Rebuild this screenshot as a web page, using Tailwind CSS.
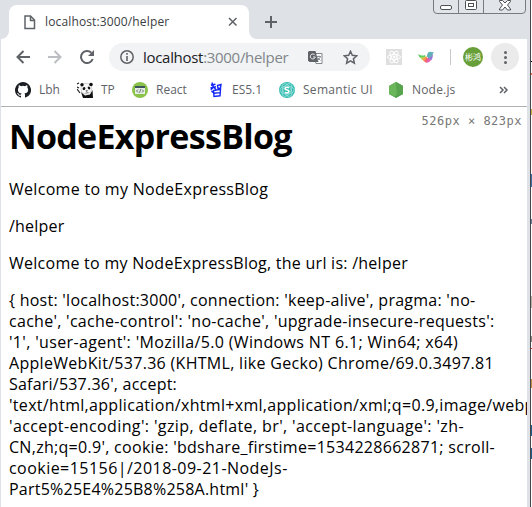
<!DOCTYPE html>
<html lang="en">
<head>
<meta charset="utf-8">
<title>localhost:3000/helper</title>
<script src="https://cdn.jsdelivr.net/npm/@tailwindcss/browser@4"></script>
</head>
<body class="w-[532px] h-[507px] overflow-hidden bg-white font-['Open_Sans','Noto_Sans_CJK_SC',sans-serif]">
<div class="flex w-[532px] h-[507px] overflow-hidden">
<div class="relative flex flex-col w-[530px] h-full bg-[#dee1e6] pl-px">
  <!-- window buttons -->
  <div class="absolute left-[433px] top-[-6px] w-[93px] h-5 border border-[#777b80] rounded-b-[4px] flex bg-[#e1e4e8]">
    <div class="w-[25px] border-r border-[#777b80]"></div>
    <div class="w-[25px] border-r border-[#777b80]"></div>
    <svg class="absolute left-0 top-[5px]" width="92" height="13" fill="none" stroke="#4d5156">
      <rect x="6.500" y="5.500" width="11" height="4" rx="1.500" fill="#fff"/>
      <rect x="31.500" y="0.500" width="11" height="9" rx="1" fill="#fff"/><rect x="34.500" y="3.500" width="5" height="3"/>
      <path d="M65.500 0.500h3l2.500 2.500 2.500-2.500h3v1l-3 3.500 3 4v1h-3l-2.500-3-2.500 3h-3v-1l3-4-3-3.500z" fill="#fff"/>
    </svg>
  </div>
  <!-- tab strip -->
  <div class="h-[39px] shrink-0 flex pt-[5px]">
    <div class="self-end w-2 h-2 bg-white"><div class="w-2 h-2 bg-[#dee1e6] rounded-br-[8px]"></div></div>
    <div class="w-[240px] h-[34px] bg-white rounded-t-[8px] flex items-center">
      <svg class="ml-[15px]" width="12" height="15" fill="none" stroke="#5f6368" stroke-width="1.500"><path d="M1 1h5.500l4 4v8.500H1zM6.500 1v4.500h4"/></svg>
      <div class="ml-[9px] w-[126px] pb-px text-[12px] leading-[16px] tracking-[0.14px] text-[#3c4043] whitespace-nowrap">localhost:3000/helper</div>
      <svg class="ml-[57px]" width="10" height="10" stroke="#5f6368" stroke-width="1.500"><path d="M1 1l7.500 7.500M8.500 1L1 8.500"/></svg>
    </div>
    <div class="self-end w-2 h-2 bg-white"><div class="w-2 h-2 bg-[#dee1e6] rounded-bl-[8px]"></div></div>
    <svg class="ml-[8px] mt-[11px]" width="12" height="12" stroke="#5f6368" stroke-width="2"><path d="M6 0v12M0 6h12"/></svg>
  </div>
  <!-- toolbar -->
  <div class="w-[526px] h-[36px] shrink-0 bg-white flex items-center">
    <svg class="ml-[15px]" width="14" height="14" fill="none" stroke="#5f6368" stroke-width="2"><path d="M14 7H1.500M7.500 1L1.500 7l6 6"/></svg>
    <svg class="ml-[18px]" width="14" height="14" fill="none" stroke="#bcbec1" stroke-width="2"><path d="M0 7h12.500M6.500 1l6 6-6 6"/></svg>
    <svg class="ml-[18px]" width="14" height="14" fill="none" stroke="#5f6368" stroke-width="2"><path d="M12.700 9A6 6 0 1 1 11.300 2.800"/><path d="M14 0v6H8z" fill="#5f6368" stroke="none"/></svg>
    <div class="ml-[15px] w-[261px] h-7 rounded-full bg-[#f1f3f4] flex items-center">
      <svg class="ml-[11px]" width="14" height="14"><circle cx="7" cy="7" r="6.200" fill="none" stroke="#5f6368" stroke-width="1.500"/><path d="M6.200 6h1.600v5H6.200zM6.200 3h1.600v1.700H6.200z" fill="#5f6368"/></svg>
      <div class="ml-[9px] w-[146px] pb-px text-[15px] leading-[20px] tracking-[-0.3px] text-[#202124] whitespace-nowrap">localhost<span class="text-[#80868b]">:3000/helper</span></div>
      <svg class="ml-[19px]" width="15" height="15"><path d="M5 3.500h9v10H8z" fill="#fff" stroke="#80868b"/><path d="M1 1h6.500l3 11H1.500L0 10.500V2z" fill="#5f6368"/><path d="M7 5.200A2.500 2.500 0 1 0 7.300 7H5" fill="none" stroke="#e8eaed"/><path d="M8.500 6.500H13M11 5.500v1M12.500 6.500q-.5 2-3 4M9.500 7.500l3 3" fill="none" stroke="#80868b" stroke-width=".9"/></svg>
      <svg class="ml-[20px]" width="15" height="15" fill="none" stroke="#5f6368" stroke-width="1.500"><path d="M7.500 1.300l1.800 4 4.400.5-3.300 2.900 1 4.400-3.900-2.300-3.900 2.300 1-4.400-3.300-2.900 4.400-.5z"/></svg>
    </div>
    <svg class="ml-[16px]" width="16" height="16"><path d="M0 0h16v16H0z" fill="#dfdfdf"/><g fill="none" stroke="#fff"><ellipse cx="8" cy="8" rx="6.500" ry="2.500"/><ellipse cx="8" cy="8" rx="6.500" ry="2.500" transform="rotate(60 8 8)"/><ellipse cx="8" cy="8" rx="6.500" ry="2.500" transform="rotate(120 8 8)"/></g><circle cx="8" cy="8" r="1.300" fill="#fff"/></svg>
    <svg class="ml-[16px]" width="17" height="16"><path d="M0 5q4 2.500 7 1l1 4-4 .5Q1 9 0 5" fill="#62cc62"/><path d="M2 8q3 1 6-.5l-1 3.500-2 .5z" fill="#d6dc52"/><path d="M4 9.800l5-2.500v4l-3 1.200z" fill="#f5a04e"/><path d="M6 12l3-3.500 2 2-2 3.300q-2 0-3-1.800" fill="#f2686c"/><path d="M8.500 13.800L10 8l3 3q-2 3-4.500 2.800" fill="#e060b4"/><path d="M10 8.500l4.500-4q1 4-1.500 7z" fill="#9a75d8"/><path d="M9 7.500q0-4.500 3.500-4.700L16 3.500 14.500 5q-.5 3-4 4z" fill="#5fb0b8"/></svg>
    <div class="ml-[15px] w-px h-4 bg-[#c7cacd]"></div>
    <div class="ml-[12px] w-5 h-5 rounded-full bg-[#689f38] text-white text-[8px] leading-[20px] text-center whitespace-nowrap">彬鸿</div>
    <div class="ml-[8px] w-7 h-7 rounded-full bg-[#ebebeb] flex flex-col items-center justify-center gap-[2px]">
      <div class="w-[3px] h-[3px] rounded-full bg-[#5f6368]"></div><div class="w-[3px] h-[3px] rounded-full bg-[#5f6368]"></div><div class="w-[3px] h-[3px] rounded-full bg-[#5f6368]"></div>
    </div>
  </div>
  <!-- bookmarks -->
  <div class="w-[526px] h-[32px] shrink-0 bg-white border-b border-[#b0b1b3] flex items-center pb-[2px] text-[12px] leading-[16px] text-[#5f6368] whitespace-nowrap">
    <svg class="ml-[14px] shrink-0" width="16" height="16" viewBox="0 0 16 16" fill="#1b1f23"><path d="M8 0a8 8 0 0 0-2.530 15.590c.4.070.55-.17.55-.38v-1.490c-2.010.37-2.530-.49-2.690-.94-.09-.23-.48-.94-.82-1.130-.28-.15-.68-.52-.01-.53.630-.01 1.080.58 1.230.82.720 1.210 1.870.87 2.330.66.070-.52.280-.87.510-1.070-1.780-.2-3.640-.89-3.640-3.950 0-.87.310-1.590.82-2.150-.08-.2-.36-1.020.08-2.120 0 0 .67-.21 2.200.82a7.600 7.600 0 0 1 4 0c1.530-1.040 2.200-.82 2.200-.82.440 1.100.160 1.920.080 2.120.510.560.820 1.270.820 2.150 0 3.070-1.870 3.750-3.650 3.950.290.250.540.730.540 1.480v2.200c0 .21.150.46.550.38A8 8 0 0 0 8 0"/></svg>
    <div class="ml-[8px] w-[21px]">Lbh</div>
    <svg class="ml-[17px] shrink-0" width="16" height="16"><path d="M0 2l2-1M0 5l2 1M0 7l3 4" stroke="#222" stroke-width="1.200"/><path d="M4 10l4 3.500 5-1L15.500 8l.5 8H6z" fill="#111"/><path d="M4.500 3Q9-.5 14 3q1.500 4 0 7-4 3.500-8 1.500Q3 9 4.500 3" fill="#f7f7f7" stroke="#bbb" stroke-width=".6"/><circle cx="5" cy="2.800" r="1.700" fill="#111"/><circle cx="14" cy="2.500" r="1.800" fill="#111"/><ellipse cx="7" cy="6.500" rx="1.300" ry="1.600" fill="#111" transform="rotate(35 7 6.500)"/><ellipse cx="12" cy="6" rx="1.200" ry="1.500" fill="#111" transform="rotate(-35 12 6)"/><path d="M8.500 8.500h2.500l-1.200 1.300zM8 11q2 1 4-.8" fill="#111"/></svg>
    <div class="ml-[8px] w-[14px]">TP</div>
    <svg class="ml-[17px] shrink-0" width="16" height="16"><circle cx="8" cy="8" r="8" fill="#8bc34a"/><path d="M3 4h10v8H3z" fill="#e5eee0"/><path d="M3 4h10v2H3z" fill="#40545b"/><path d="M6 7.500L4.500 9 6 10.500M10 7.500L11.500 9 10 10.500M8.700 7.200l-1.200 3.600" fill="none" stroke="#40545b" stroke-width=".8"/></svg>
    <div class="ml-[8px] w-[32px]">React</div>
    <svg class="ml-[22px] shrink-0" width="12" height="16" fill="none" stroke="#1326f5" stroke-width="1.400"><path d="M2.500.5L1.500 4M1 3l4.500-.8M.5 6L6 4.800M3.500 2.500Q3.500 6 .8 7.800M4 5.500l1.800 2M7.500 3.500l3.500-1-.5 3.500-2.500.7zM3.500 8.500l7-1.200-.5 6.500-6 .7zM4 11.300l6-.7M1.500 9l1.500 1.500"/></svg>
    <div class="ml-[10px] w-[30px]">ES5.1</div>
    <svg class="ml-[17px] shrink-0" width="16" height="16"><circle cx="8" cy="8" r="8" fill="#35bdb2"/><g fill="none" stroke="#a5e2dc" stroke-width=".7"><ellipse cx="8" cy="8" rx="7" ry="4"/><ellipse cx="8" cy="8" rx="7" ry="4" transform="rotate(60 8 8)"/><ellipse cx="8" cy="8" rx="7" ry="4" transform="rotate(120 8 8)"/></g><path d="M10 5.800Q8 4.500 6.500 5.800T8 8t1.500 2.200T6 10.300" fill="none" stroke="#fff" stroke-width="1.500"/></svg>
    <div class="ml-[8px] w-[71px] tracking-[0.29px]">Semantic UI</div>
    <svg class="ml-[14px] shrink-0" width="16" height="16"><path d="M8 0l7 4v8l-7 4-7-4V4z" fill="#439b43"/><path d="M8 0l7 4-8 11-6-3V4z" fill="#6bb55a"/><path d="M8 0l7 4v8l-6 3z" fill="#58a34d"/></svg>
    <div class="ml-[8px] w-[45px] tracking-[0.18px]">Node.js</div>
    <svg class="ml-[42px] shrink-0" width="10" height="8" fill="none" stroke="#5f6368" stroke-width="1.500"><path d="M1 1l3 3-3 3M5 1l3 3-3 3"/></svg>
  </div>
  <!-- page -->
  <div class="relative w-[526px] h-[400px] bg-white overflow-hidden pl-[8px] text-black whitespace-nowrap">
    <div class="absolute right-[5px] top-[6px] text-[12px] leading-[16px] tracking-[0.5px] text-[#777] font-['DejaVu_Sans_Mono',monospace]">526px × 823px</div>
    <h1 class="mt-[7px] text-[34px] leading-[44px] font-bold tracking-[-0.7px]">NodeExpressBlog</h1>
    <p class="mt-[21px] text-[16px] leading-[21px] tracking-[0.3px]">Welcome to my NodeExpressBlog</p>
    <p class="mt-[16px] text-[16px] leading-[21px] tracking-[0.2px]">/helper</p>
    <p class="mt-[16px] text-[16px] leading-[21px] tracking-[0.26px]">Welcome to my NodeExpressBlog, the url is: /helper</p>
    <p class="mt-[16px] text-[16px] leading-[21px]">
      <span class="tracking-[0.255px]">{ host: 'localhost:3000', connection: 'keep-alive', pragma: 'no-</span><br>
      <span class="tracking-[0.287px]">cache', 'cache-control': 'no-cache', 'upgrade-insecure-requests':</span><br>
      <span class="tracking-[0.349px]">'1', 'user-agent': 'Mozilla/5.0 (Windows NT 6.1; Win64; x64)</span><br>
      <span class="tracking-[0.303px]">AppleWebKit/537.36 (KHTML, like Gecko) Chrome/69.0.3497.81</span><br>
      <span class="tracking-[0.216px]">Safari/537.36', accept:</span><br>
      <span class="tracking-[0.311px]">'text/html,application/xhtml+xml,application/xml;q=0.9,image/webp</span><br>
      <span class="tracking-[0.386px]">'accept-encoding': 'gzip, deflate, br', 'accept-language': 'zh-</span><br>
      <span class="tracking-[0.292px]">CN,zh;q=0.9', cookie: 'bdshare_firstime=1534228662871; scroll-</span><br>
      <span class="tracking-[0.46px]">cookie=15156|/2018-09-21-NodeJs-</span><br>
      <span class="tracking-[0.232px]">Part5%25E4%25B8%258A.html' }</span>
    </p>
  </div>
</div>
<!-- window behind -->
<div class="w-[2px] h-full bg-white border-l border-[#44464a] flex flex-col shrink-0">
  <div class="mt-[61px] h-px bg-black"></div><div class="mt-[11px] h-[2px] bg-[#e57350]"></div>
  <div class="mt-[34px] h-[6px] bg-[#c9ae45]"></div><div class="mt-[59px] h-[13px] bg-[#3a6ea5]"></div>
  <div class="mt-[32px] h-[5px] bg-[#6b7f98]"></div><div class="mt-[72px] h-[12px] bg-[#b9b2a4]"></div><div class="mt-[28px] h-[6px] bg-[#8f8a80]"></div>
  <div class="mt-[6px] h-px bg-[#c33]"></div><div class="mt-[30px] h-[9px] bg-[#c28a45]"></div>
  <div class="mt-[37px] h-[11px] bg-[#1c5f8c]"></div><div class="mt-[12px] h-[11px] bg-[#1c5f8c]"></div>
</div>
</div>
</body>
</html>
